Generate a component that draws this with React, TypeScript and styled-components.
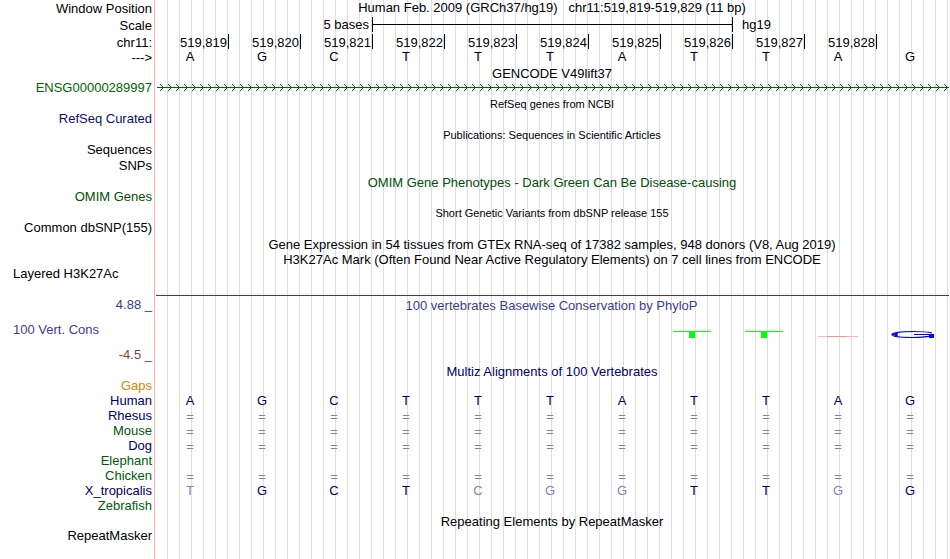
import React from "react";
import styled, { createGlobalStyle } from "styled-components";

type Align = "left" | "right";

interface Track {
  height: number;
  label?: string;
  title?: string;
  color?: string;
  small?: boolean;
  align?: Align;
}

interface Species {
  name: string;
  color: string;
  bases: string;
}

const BLACK = "#000000";
const NAVY = "#000064";
const REFSEQ = "#0c0c78";
const GREEN = "#006400";
const OMIM = "#005000";
const PHYLOP = "#3c3c8c";
const NEGATIVE = "#8c3c3c";
const FADED = "#8080b4";

const sequence = "AGCTTTATTAG";
const positions = Array.from({ length: 10 }, (_, i) => `519,${819 + i}`);

const tracks: Track[] = [
  { height: 16, title: "RefSeq genes from NCBI", small: true },
  { height: 15, label: "RefSeq Curated", color: REFSEQ },
  { height: 16, title: "Publications: Sequences in Scientific Articles", small: true },
  { height: 15, label: "Sequences" },
  { height: 16, label: "SNPs" },
  { height: 16, title: "OMIM Gene Phenotypes - Dark Green Can Be Disease-causing", color: OMIM },
  { height: 15, label: "OMIM Genes", color: OMIM },
  { height: 16, title: "Short Genetic Variants from dbSNP release 155", small: true },
  { height: 15, label: "Common dbSNP(155)" },
  {
    height: 16,
    title: "Gene Expression in 54 tissues from GTEx RNA-seq of 17382 samples, 948 donors (V8, Aug 2019)",
  },
  {
    height: 15,
    title: "H3K27Ac Mark (Often Found Near Active Regulatory Elements) on 7 cell lines from ENCODE",
  },
  { height: 15, label: "Layered H3K27Ac", align: "left" },
];

// "=" marks an unalignable base, a blank row has no alignment at all
const species: Species[] = [
  { name: "Gaps", color: "#e08200", bases: "" },
  { name: "Human", color: NAVY, bases: sequence },
  { name: "Rhesus", color: NAVY, bases: "===========" },
  { name: "Mouse", color: "#005a0a", bases: "===========" },
  { name: "Dog", color: NAVY, bases: "===========" },
  { name: "Elephant", color: "#005a0a", bases: "" },
  { name: "Chicken", color: "#005a0a", bases: "===========" },
  { name: "X_tropicalis", color: NAVY, bases: "TGCTCGGTTGG" },
  { name: "Zebrafish", color: "#005a0a", bases: "" },
];

function LogoMark({ index }: { index: number }) {
  if (index === 7 || index === 8) {
    return (
      <Mark viewBox="0 0 72 10">
        <rect x="12" y="1" width="38" height="1" fill="#00ff00" />
        <rect x="28" y="1" width="6" height="7" fill="#00ff00" />
      </Mark>
    );
  }
  if (index === 9) {
    return (
      <Mark viewBox="0 0 72 10">
        <rect x="13" y="6" width="40" height="1" fill="#ffb4b4" />
        <rect x="22" y="6" width="20" height="1" fill="#ff8c8c" />
      </Mark>
    );
  }
  if (index === 10) {
    return (
      <Mark viewBox="0 0 72 10">
        <path
          d="M55 3 C50 1.5 42 1.5 36 1.5 C24 1.5 15 2.6 15 4.5 C15 6.6 24 7.5 35 7.5 C44 7.5 51 7 55 5.4"
          fill="none"
          stroke="#0000ff"
          strokeWidth="1.2"
        />
        <path d="M14 4.5 L22 2 Q19 4.5 22 7 Z" fill="#0000ff" />
        <rect x="37" y="4" width="20" height="1" fill="#0000ff" />
        <rect x="52" y="5" width="5" height="3" fill="#0000ff" />
      </Mark>
    );
  }
  return <span />;
}

function App() {
  return (
    <>
      <GlobalStyle />
      <Browser>
        <RulerRow $height={17}>
          <Label>Window Position</Label>
          <Title>Human Feb. 2009 (GRCh37/hg19)&nbsp;&nbsp; chr11:519,819-519,829 (11 bp)</Title>
        </RulerRow>
        <RulerRow $height={17}>
          <Label>Scale</Label>
          <BaseGrid>
            <ScaleSize>5 bases</ScaleSize>
            <ScaleBar>
              <ScaleLine />
            </ScaleBar>
            <Assembly>hg19</Assembly>
          </BaseGrid>
        </RulerRow>
        <RulerRow $height={17}>
          <Label>chr11:</Label>
          <BaseGrid>
            {positions.map((position) => (
              <Position key={position}>{position}</Position>
            ))}
          </BaseGrid>
        </RulerRow>
        <RulerRow $height={15}>
          <TrackLabel>---&gt;</TrackLabel>
          <BaseGrid>
            {sequence.split("").map((base, index) => (
              <Base key={index}>{base}</Base>
            ))}
          </BaseGrid>
        </RulerRow>
        <Row $height={15}>
          <Title>GENCODE V49lift37</Title>
        </Row>
        <Row $height={15}>
          <TrackLabel $color={GREEN}>ENSG00000289997</TrackLabel>
          <Transcript shapeRendering="crispEdges">
            <defs>
              <pattern id="strand" width="8" height="7" patternUnits="userSpaceOnUse">
                <path
                  d="M3 0h1v1h-1z M4 1h1v1h-1z M5 2h1v1h-1z M6 3h1v1h-1z M5 4h1v1h-1z M4 5h1v1h-1z M3 6h1v1h-1z"
                  fill={GREEN}
                />
              </pattern>
            </defs>
            <rect width="100%" height="7" fill="url(#strand)" />
            <rect y="3" width="100%" height="1" fill={GREEN} />
          </Transcript>
        </Row>

        {tracks.map((track, index) => (
          <Row key={index} $height={track.height}>
            {track.label && (
              <TrackLabel $color={track.color} $align={track.align}>
                {track.label}
              </TrackLabel>
            )}
            {track.title && (
              <Title $color={track.color} $small={track.small}>
                {track.title}
              </Title>
            )}
          </Row>
        ))}

        <Conservation>
          <Scores>
            <Label $color={PHYLOP}>4.88 _</Label>
            <Label $color={PHYLOP} $align="left">
              100 Vert. Cons
            </Label>
            <Label $color={NEGATIVE}>-4.5 _</Label>
          </Scores>
          <Plot>
            <Title $color={PHYLOP}>100 vertebrates Basewise Conservation by PhyloP</Title>
            <LogoGrid>
              {sequence.split("").map((_, index) => (
                <LogoMark key={index} index={index} />
              ))}
            </LogoGrid>
          </Plot>
        </Conservation>

        <RulerRow $height={14}>
          <Title $color={NAVY}>Multiz Alignments of 100 Vertebrates</Title>
        </RulerRow>
        <Alignment>
          <tbody>
            {species.map(({ name, color, bases }) => (
              <tr key={name}>
                <SpeciesName scope="row" $color={color}>
                  {name}
                </SpeciesName>
                {sequence.split("").map((human, index) => (
                  <AlignedBase
                    key={index}
                    $match={bases[index] === human}
                    $unaligned={bases[index] === "="}
                  >
                    {bases[index]}
                  </AlignedBase>
                ))}
              </tr>
            ))}
          </tbody>
        </Alignment>
        <Row $height={16}>
          <Title>Repeating Elements by RepeatMasker</Title>
        </Row>
        <Row $height={15}>
          <TrackLabel>RepeatMasker</TrackLabel>
        </Row>
      </Browser>
    </>
  );
}

export default App;

const GlobalStyle = createGlobalStyle`
  body {
    margin: 0;
    background: #ffffff;
  }
`;

// pink divider after the labels, then a guide line every 12px
const Browser = styled.main`
  box-sizing: border-box;
  min-height: 100vh;
  font-family: "Liberation Sans", Arial, Helvetica, sans-serif;
  font-size: 13px;
  line-height: 15px;
  color: ${BLACK};
  background-image: linear-gradient(#ffb4b4, #ffb4b4),
    repeating-linear-gradient(to right, transparent 0 10px, #dcdcf8 10px 11px, transparent 11px 12px);
  background-repeat: no-repeat;
  background-position: 154px 0, 157px 0;
  background-size: 1px 100%, 100% 100%;
`;

const Row = styled.div<{ $height: number }>`
  display: grid;
  grid-template-columns: 156px minmax(0, 1fr);
  grid-template-rows: 100%;
  align-items: center;
  height: ${({ $height }) => $height}px;
`;

const RulerRow = styled(Row)`
  align-items: start;
`;

const Label = styled.div<{ $color?: string; $align?: Align }>`
  grid-column: 1;
  align-self: center;
  padding: 0 4px 0 13px;
  text-align: ${({ $align = "right" }) => $align};
  white-space: nowrap;
  color: ${({ $color = BLACK }) => $color};
`;

const TrackLabel = styled(Label)`
  padding-bottom: 2px;
`;

const Title = styled.div<{ $color?: string; $small?: boolean }>`
  grid-column: 2;
  padding-right: 2px;
  font-size: ${({ $small }) => ($small ? 11 : 13)}px;
  text-align: center;
  white-space: nowrap;
  color: ${({ $color = BLACK }) => $color};
`;

const BaseGrid = styled.div`
  grid-column: 2;
  display: grid;
  grid-template-columns: repeat(11, minmax(0, 1fr));
  grid-template-rows: 100%;
  height: 15px;
  margin: 0 1px;
`;

const ScaleSize = styled.div`
  grid-column: 3;
  padding-right: 4px;
  text-align: right;
`;

const ScaleBar = styled.div`
  grid-column: 4 / 9;
  display: flex;
  align-items: center;
  margin-left: -1px;
  border: solid ${BLACK};
  border-width: 0 1px;
`;

const ScaleLine = styled.div`
  flex: 1;
  height: 1px;
  background: ${BLACK};
`;

const Assembly = styled.div`
  grid-column: 9 / 12;
  padding-left: 9px;
`;

const Position = styled.div`
  padding-right: 1px;
  border-right: 1px solid ${BLACK};
  line-height: 17px;
  text-align: right;
`;

const Base = styled.div`
  padding-right: 6px;
  line-height: 11px;
  text-align: center;
`;

const Transcript = styled.svg`
  grid-column: 2;
  display: block;
  width: calc(100% - 2px);
  height: 7px;
  margin: 0 1px 2px;
`;

const Conservation = styled.section`
  display: grid;
  grid-template-columns: 156px minmax(0, 1fr);
  height: 69px;
  margin-top: 13px;
`;

const Scores = styled.div`
  display: flex;
  flex-direction: column;
  justify-content: space-between;
  padding: 2px 0;

  ${Label} {
    align-self: stretch;
  }
`;

const Plot = styled.div`
  margin-right: 1px;
  border-top: 1px solid #3232c8;
  padding-top: 2px;
`;

const LogoGrid = styled.div`
  display: grid;
  grid-template-columns: repeat(11, minmax(0, 1fr));
  margin: 17px 0 0 1px;
`;

const Mark = styled.svg`
  display: block;
  width: 72px;
  height: 10px;
`;

const Alignment = styled.table`
  width: calc(100% - 1px);
  table-layout: fixed;
  border-collapse: collapse;
`;

const SpeciesName = styled.th<{ $color: string }>`
  width: 152px;
  height: 15px;
  padding: 0 5px 0 0;
  font-weight: normal;
  text-align: right;
  color: ${({ $color }) => $color};
`;

const AlignedBase = styled.td<{ $match: boolean; $unaligned: boolean }>`
  padding: ${({ $unaligned }) => ($unaligned ? 2 : 0)}px 6px 0 0;
  line-height: 13px;
  text-align: center;
  color: ${({ $match }) => ($match ? NAVY : FADED)};
`;
